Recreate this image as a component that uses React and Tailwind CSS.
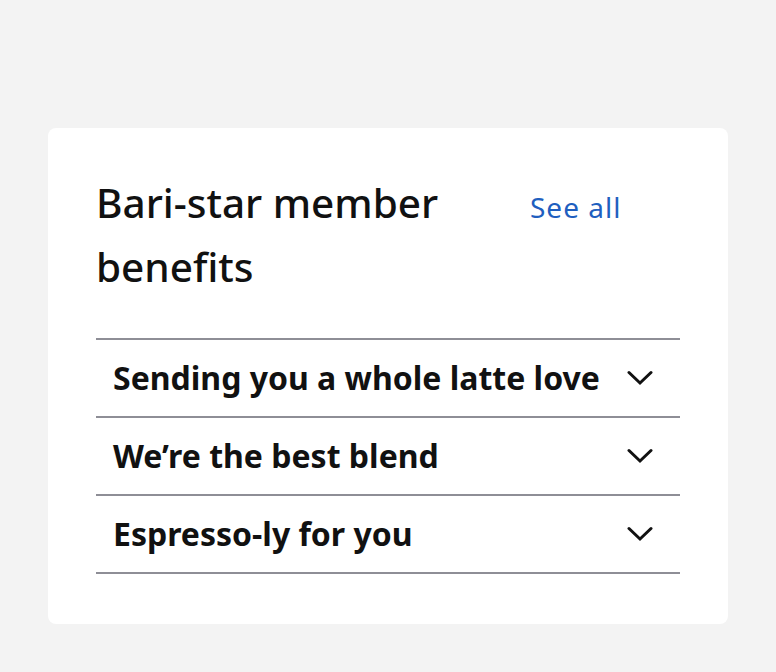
import React from "react";

const items = [
  "Sending you a whole latte love",
  "We\u2019re the best blend",
  "Espresso-ly for you",
];

function Chevron() {
  return (
    <svg width="26" height="16" viewBox="0 0 26 16" fill="none">
      <path d="M2 2.5 L13 13 L24 2.5" stroke="#111" strokeWidth="3" strokeLinecap="round" strokeLinejoin="miter" />
    </svg>
  );
}

export default function App() {
  return (
    <div className="min-h-[672px] w-full bg-[#f3f3f3] pt-[128px] px-[48px]" style={{ fontFamily: '"Noto Sans", sans-serif' }}>
      <div className="w-[680px] h-[496px] bg-white rounded-[8px] px-[48px] pt-[43px]">
        <div className="flex items-baseline">
          <h2 className="w-[420px] text-[40.5px] leading-[64px] text-[#111] font-medium">Bari-star member benefits</h2>
          <a className="ml-[14px] text-[28px] leading-[40px] text-[#1f5fbf] tracking-[1px]">See all</a>
        </div>
        <div className="mt-[39px] border-b-2 border-[#8e8e96]">
          {items.map((t) => (
            <div key={t} className="flex items-center justify-between h-[78px] border-t-2 border-[#8e8e96] pl-[17px] pr-[27px]">
              <span className="text-[32px] font-bold text-[#111] leading-none">{t}</span>
              <Chevron />
            </div>
          ))}
        </div>
      </div>
    </div>
  );
}
